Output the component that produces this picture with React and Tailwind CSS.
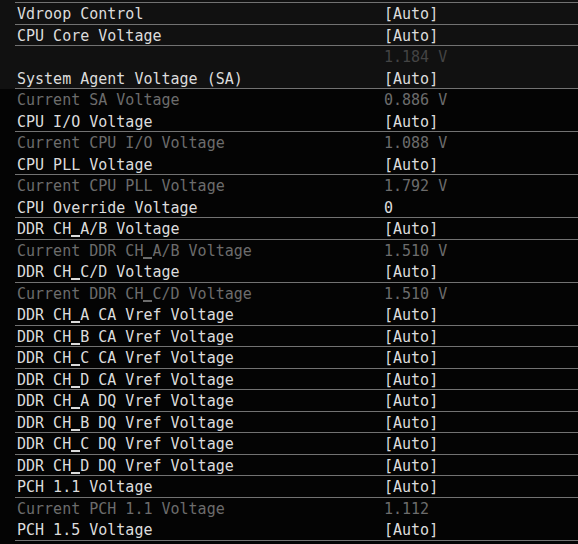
import React from "react";

const rows = [
  ["Vdroop Control", "[Auto]", "sel"],
  ["CPU Core Voltage", "[Auto]", "sel"],
  ["", "1.184 V", "faint"],
  ["System Agent Voltage (SA)", "[Auto]", "sel"],
  ["Current SA Voltage", "0.886 V", "dim"],
  ["CPU I/O Voltage", "[Auto]", "sel"],
  ["Current CPU I/O Voltage", "1.088 V", "dim"],
  ["CPU PLL Voltage", "[Auto]", "sel"],
  ["Current CPU PLL Voltage", "1.792 V", "dim"],
  ["CPU Override Voltage", "0", "sel"],
  ["DDR CH_A/B Voltage", "[Auto]", "sel"],
  ["Current DDR CH_A/B Voltage", "1.510 V", "dim"],
  ["DDR CH_C/D Voltage", "[Auto]", "sel"],
  ["Current DDR CH_C/D Voltage", "1.510 V", "dim"],
  ["DDR CH_A CA Vref Voltage", "[Auto]", "sel"],
  ["DDR CH_B CA Vref Voltage", "[Auto]", "sel"],
  ["DDR CH_C CA Vref Voltage", "[Auto]", "sel"],
  ["DDR CH_D CA Vref Voltage", "[Auto]", "sel"],
  ["DDR CH_A DQ Vref Voltage", "[Auto]", "sel"],
  ["DDR CH_B DQ Vref Voltage", "[Auto]", "sel"],
  ["DDR CH_C DQ Vref Voltage", "[Auto]", "sel"],
  ["DDR CH_D DQ Vref Voltage", "[Auto]", "sel"],
  ["PCH 1.1 Voltage", "[Auto]", "sel"],
  ["Current PCH 1.1 Voltage", "1.112", "dim"],
  ["PCH 1.5 Voltage", "[Auto]", "sel"],
];

function Label({ text, sel }) {
  const parts = text.split("_");
  const bar = sel ? "bg-[#dcdcdc]" : "bg-[#6c6c6c]";
  return parts.map((p, i) => (
    <React.Fragment key={i}>
      {p}
      {i < parts.length - 1 && (
        <span className="relative text-transparent">
          _
          <span className={"absolute bottom-[1px] left-0 right-0 h-[2px] " + bar} />
        </span>
      )}
    </React.Fragment>
  ));
}

function Row({ label, value, kind }) {
  const sel = kind === "sel";
  const labelColor = sel ? "text-[#dcdcdc]" : "text-[#6c6c6c]";
  const valueColor =
    kind === "sel" ? "text-[#dcdcdc]" : kind === "faint" ? "text-[#444444]" : "text-[#6c6c6c]";
  return (
    <div
      className={
        "ml-[15px] flex h-[21.5px] border-b pt-[3px] " +
        (sel ? "border-[#727272]" : "border-transparent")
      }
    >
      <div className={"w-[369px] shrink-0 pl-[2px] leading-[17.5px] whitespace-pre " + labelColor}>
        <Label text={label} sel={sel} />
      </div>
      <div className={"leading-[17.5px] whitespace-pre " + valueColor}>{value}</div>
    </div>
  );
}

export default function App() {
  return (
    <div
      className="h-[544px] w-[578px] overflow-hidden bg-[#040404] text-[15px]"
      style={{ fontFamily: '"DejaVu Sans Mono", monospace' }}
    >
      <div className="bg-[#111111] pt-[2px]">
        <div className="ml-[15px] h-px bg-[#727272]" />
        {rows.slice(0, 4).map((r, i) => (
          <Row key={i} label={r[0]} value={r[1]} kind={r[2]} />
        ))}
      </div>
      {rows.slice(4).map((r, i) => (
        <Row key={i} label={r[0]} value={r[1]} kind={r[2]} />
      ))}
    </div>
  );
}
